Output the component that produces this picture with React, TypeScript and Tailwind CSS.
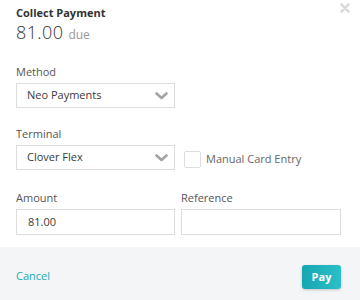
export default function App() {
  const Chevron = () => (
    <svg width="13" height="8" viewBox="0 0 13 8" className="shrink-0">
      <path d="M1.5 1.5 L6.5 6 L11.5 1.5" fill="none" stroke="#a3a3a3" strokeWidth="2.6" strokeLinecap="round" strokeLinejoin="round" />
    </svg>
  );

  return (
    <div className="w-[360px] h-[300px] bg-white flex flex-col font-['Open_Sans',sans-serif] text-[#3a3a3a]">
      <div className="flex-1 pl-4 pr-[19px] relative">
        {/* close */}
        <button className="absolute right-[10px] top-[3px]">
          <svg width="10" height="10" viewBox="0 0 10 10">
            <path d="M1.5 1.5 L8.5 8.5 M8.5 1.5 L1.5 8.5" stroke="#dcdcdc" strokeWidth="2.6" strokeLinecap="round" />
          </svg>
        </button>

        <div className="pt-[6px] text-[11px] leading-[14px] font-bold text-[#333]">Collect Payment</div>
        <div className="flex items-baseline gap-[5px] mt-[1px]">
          <span className="text-[18px] leading-[22px] font-light tracking-[0.4px] text-[#333]">81.00</span>
          <span className="text-[12px] text-[#999]">due</span>
        </div>

        {/* method */}
        <div className="mt-[21px] text-[11px] leading-[14px] text-[#555]">Method</div>
        <div className="mt-[4px] w-[159px] h-[25px] border border-[#ddd] flex items-center justify-between pl-[10px] pr-[6px] text-[11px]">
          <span>Neo Payments</span>
          <Chevron />
        </div>

        {/* terminal */}
        <div className="mt-[19px] text-[11px] leading-[14px] text-[#555]">Terminal</div>
        <div className="mt-[4px] flex items-center gap-[9px]">
          <div className="w-[159px] h-[25px] border border-[#ddd] flex items-center justify-between pl-[10px] pr-[6px] text-[11px]">
            <span>Clover Flex</span>
            <Chevron />
          </div>
          <label className="flex items-center gap-[5px] text-[11px] text-[#666] mt-[4px]">
            <span className="w-[17px] h-[17px] border border-[#ddd] rounded-[2px] bg-white" />
            Manual Card Entry
          </label>
        </div>

        {/* amount / reference */}
        <div className="mt-[21px] grid grid-cols-[159px_160px] gap-x-[6px]">
          <div className="text-[11px] leading-[14px] text-[#555]">Amount</div>
          <div className="text-[11px] leading-[14px] text-[#555]">Reference</div>
          <div className="mt-[4px] h-[26px] border border-[#ddd] flex items-center px-[11px] text-[11px]">81.00</div>
          <div className="mt-[4px] h-[26px] border border-[#ddd]" />
        </div>
      </div>

      <div className="h-[53px] bg-[#f4f5f7] flex items-start justify-between pl-4 pr-[19px] pt-[18px]">
        <button className="mt-[3px] text-[11px] leading-[16px] text-[#22aab5]">Cancel</button>
        <button className="w-[39px] h-[24px] rounded-[3px] bg-gradient-to-r from-[#15a6b2] to-[#2bbfc9] text-white text-[11px] font-bold shadow-[0_1px_3px_rgba(0,0,0,0.2)]">
          Pay
        </button>
      </div>
    </div>
  );
}
